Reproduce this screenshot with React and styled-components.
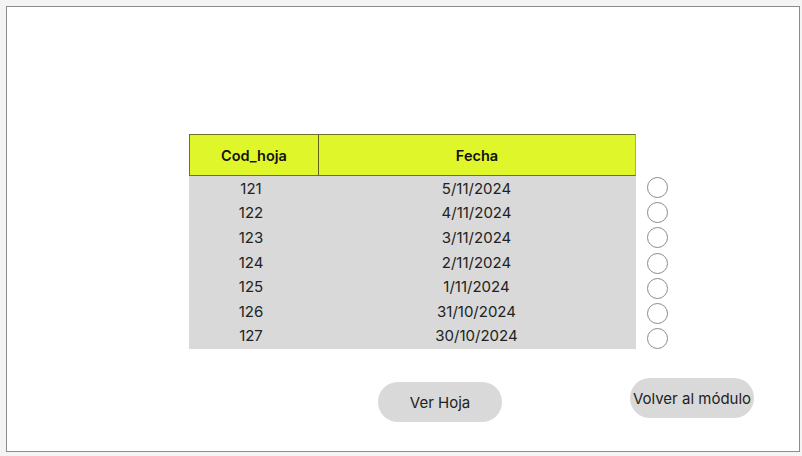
import styled, { createGlobalStyle } from 'styled-components';

const GlobalStyle = createGlobalStyle`
  html, body {
    margin: 0;
    padding: 0;
    background: #f4f4f4;
    font-family: Inter, "Noto Sans", sans-serif;
  }
`;

const Page = styled.div`
  width: 802px;
  height: 456px;
  padding: 6px 0 0 6px;
  box-sizing: border-box;
`;

const Frame = styled.div`
  width: 794px;
  height: 446px;
  box-sizing: border-box;
  background: #ffffff;
  border: 1px solid #8c8c8c;
  padding: 127px 0 0 182px;
  display: flex;
  flex-direction: column;
`;

const Content = styled.div`
  display: flex;
  gap: 11px;
`;

const Table = styled.div`
  width: 447px;
  display: flex;
  flex-direction: column;
`;

const HeaderRow = styled.div`
  display: grid;
  grid-template-columns: 128px 1fr;
  height: 42px;
  background: #dff72a;
  border: 1px solid #6f6f2c;
  border-right-color: #a9b34a;
  box-sizing: border-box;
`;

const HeaderCell = styled.div`
  display: flex;
  align-items: center;
  justify-content: center;
  font-weight: 600;
  font-size: 14.5px;
  color: #111;
  border-left: ${(p) => (p.$divider ? '1px solid #5f5f22' : 'none')};
`;

const Body = styled.div`
  background: #d9d9d9;
  padding-bottom: 1px;
`;

const Row = styled.div`
  display: grid;
  grid-template-columns: 128px 1fr;
  height: 24.6px;
  align-items: center;
  font-size: 15px;
  color: #222;
`;

const Cell = styled.div`
  text-align: center;
  padding-right: ${(p) => p.$shift || 0}px;
`;

const Radios = styled.div`
  margin-top: 43px;
  display: flex;
  flex-direction: column;
  gap: 4.2px;
`;

const Radio = styled.div`
  width: 21px;
  height: 21px;
  box-sizing: border-box;
  border: 1px solid #8a8a8a;
  border-radius: 50%;
  background: #fff;
`;

const Actions = styled.div`
  display: flex;
  align-items: flex-start;
  padding-left: 189px;
  gap: 128px;
`;

const Pill = styled.button`
  width: 124px;
  height: 40px;
  border: none;
  border-radius: 20px;
  background: #d9d9d9;
  font-family: Inter, "Noto Sans", sans-serif;
  font-size: 15px;
  color: #222;
  margin-top: ${(p) => p.$top}px;
  padding: 0;
  white-space: nowrap;
  cursor: pointer;
`;

const rows = [
  ['121', '5/11/2024'],
  ['122', '4/11/2024'],
  ['123', '3/11/2024'],
  ['124', '2/11/2024'],
  ['125', '1/11/2024'],
  ['126', '31/10/2024'],
  ['127', '30/10/2024'],
];

export default function App() {
  return (
    <Page>
      <GlobalStyle />
      <Frame>
        <Content>
          <Table>
            <HeaderRow>
              <HeaderCell>Cod_hoja</HeaderCell>
              <HeaderCell $divider>Fecha</HeaderCell>
            </HeaderRow>
            <Body>
              {rows.map(([cod, fecha]) => (
                <Row key={cod}>
                  <Cell $shift={4}>{cod}</Cell>
                  <Cell>{fecha}</Cell>
                </Row>
              ))}
            </Body>
          </Table>
          <Radios>
            {rows.map(([cod]) => (
              <Radio key={cod} />
            ))}
          </Radios>
        </Content>
        <Actions>
          <Pill $top={33}>Ver Hoja</Pill>
          <Pill $top={29}>Volver al módulo</Pill>
        </Actions>
      </Frame>
    </Page>
  );
}
